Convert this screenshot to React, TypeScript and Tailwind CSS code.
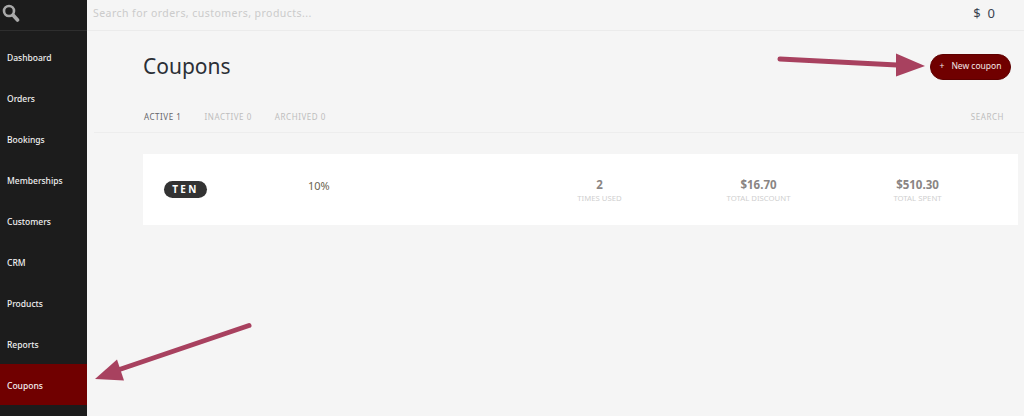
const navItems = ['Dashboard', 'Orders', 'Bookings', 'Memberships', 'Customers', 'CRM', 'Products', 'Reports', 'Coupons'];

const stats = [
  { value: '2', label: 'TIMES USED' },
  { value: '$16.70', label: 'TOTAL DISCOUNT' },
  { value: '$510.30', label: 'TOTAL SPENT' },
];

const Arrows = () => (
  <svg className="absolute left-0 top-0 pointer-events-none" width="1024" height="416" viewBox="0 0 1024 416">
    <path d="M780 59 L897 65" stroke="#a8415f" strokeWidth="5" strokeLinecap="round" fill="none" />
    <path d="M896 53.5 L925 66 L896 76.5 Z" fill="#a8415f" />
    <path d="M249 325.5 L118 370" stroke="#a8415f" strokeWidth="5" strokeLinecap="round" fill="none" />
    <path d="M95 379 L117 359.5 L124 380.5 Z" fill="#a8415f" />
  </svg>
);

export default function App() {
  return (
    <div className="relative flex h-[416px] w-[1024px] overflow-hidden bg-[#f5f5f5] font-['Noto_Sans',sans-serif]">
      {/* Sidebar */}
      <aside className="w-[87px] shrink-0 bg-[#1c1c1c]">
        <div className="flex h-[31px] items-start border-b border-[#2e2e2e]">
          <svg width="20" height="24" viewBox="0 0 20 24" fill="none" stroke="#a9a9a9">
            <circle cx="9" cy="11" r="5" strokeWidth="2.6" />
            <path d="M13 15 L17.5 20" strokeWidth="3.6" strokeLinecap="round" />
          </svg>
        </div>
        <nav className="pt-[5px]">
          {navItems.map((item) => (
            <div
              key={item}
              className={`flex h-[41px] items-center pl-[7px] pt-[3px] text-[8.5px] font-medium text-[#f0f0f0] ${item === 'Coupons' ? 'bg-[#700000]' : ''}`}
            >
              {item}
            </div>
          ))}
        </nav>
      </aside>

      <div className="min-w-0 flex-1">
        {/* Top bar */}
        <header className="flex h-[31px] items-center justify-between border-b border-[#ebebeb] pb-[2px] pl-[6px] pr-[29px]">
          <span className="text-[10.5px] tracking-[0.45px] text-[#cbcbcb]">Search for orders, customers, products...</span>
          <span className="text-[13px] text-[#3a4350]">$&nbsp;&nbsp;0</span>
        </header>

        {/* Title */}
        <div className="flex h-[71px] items-center justify-between pl-[56px] pr-[13px]">
          <h1 className="text-[21px] leading-none text-[#2b2f36]">Coupons</h1>
          <button className="flex h-[26px] w-[81px] items-center justify-center gap-[7px] rounded-full border border-[#5e0000] bg-[#700000] text-[8.5px] text-[#f3e6e6]">
            <span>+</span>
            <span>New coupon</span>
          </button>
        </div>

        {/* Tabs */}
        <div className="ml-[7px] flex h-[31px] items-center justify-between border-b border-[#ededed] pl-[50px] pr-[20px] text-[8px] tracking-[0.55px] text-[#bdbdbd]">
          <div className="flex gap-[23px]">
            <span className="text-[#66666b]">ACTIVE 1</span>
            <span>INACTIVE 0</span>
            <span>ARCHIVED 0</span>
          </div>
          <span>SEARCH</span>
        </div>

        {/* Coupon row */}
        <div className="ml-[56px] mr-[6px] mt-[21px] flex h-[71px] items-center bg-white pl-[21px]">
          <span className="flex h-[17px] w-[43px] items-center justify-center rounded-full bg-[#333333] text-[10px] font-bold tracking-[2.4px] text-white">
            TEN
          </span>
          <span className="mb-[7px] ml-[101px] w-[212px] text-[11px] text-[#6b6550]">10%</span>
          <div className="flex pt-[2px]">
            {stats.map((stat) => (
              <div key={stat.label} className="flex w-[159px] flex-col items-center">
                <span className="text-[11.5px] font-bold leading-[16px] text-[#8a8583]">{stat.value}</span>
                <span className="text-[7.75px] leading-[11px] text-[#cfcfcf]">{stat.label}</span>
              </div>
            ))}
          </div>
        </div>
      </div>

      <Arrows />
    </div>
  );
}
